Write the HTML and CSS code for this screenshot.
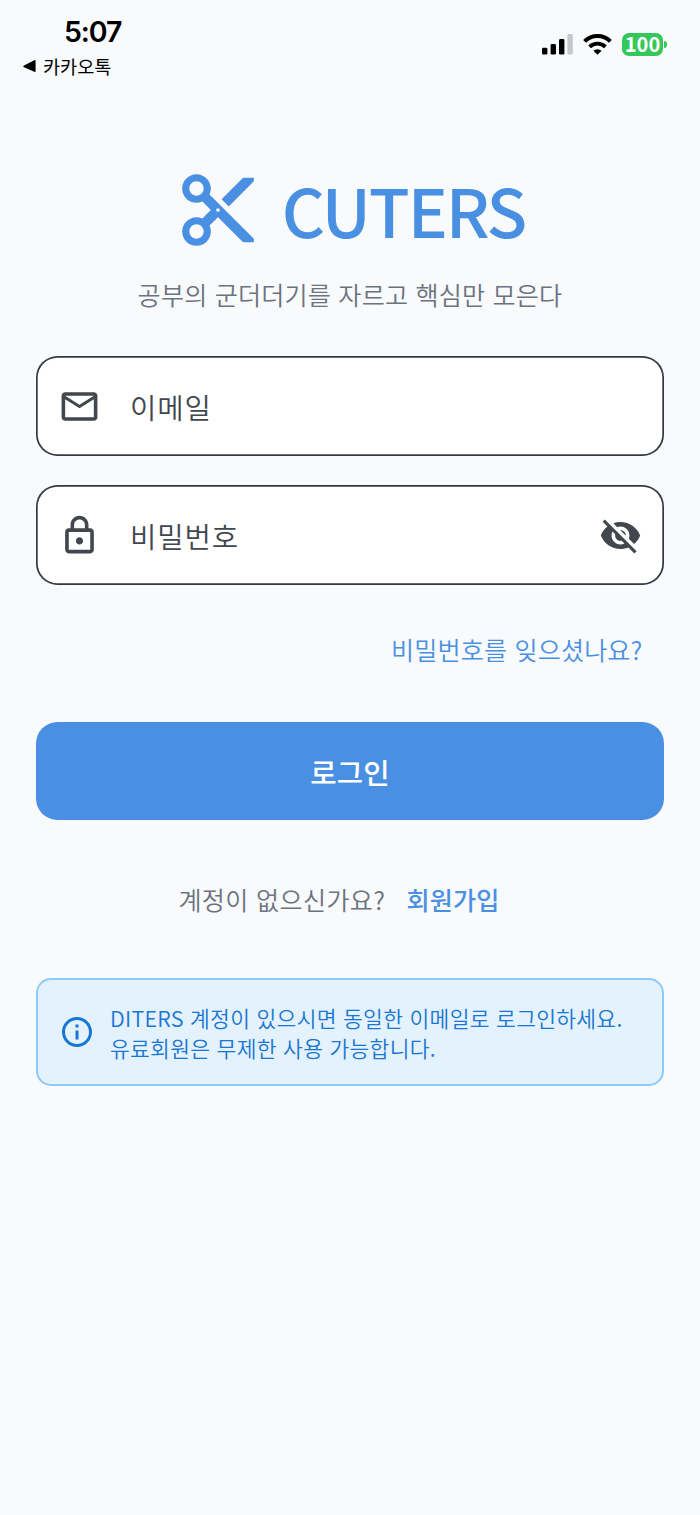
FILE: index.html
```
<!DOCTYPE html>
<html lang="ko">
<head>
  <meta charset="UTF-8">
  <meta name="viewport" content="width=device-width, initial-scale=1.0">
  <title>CUTERS 로그인</title>
  <link rel="stylesheet" href="styles.css">
</head>
<body>
  <header class="status-bar">
    <div class="status-left">
      <div class="time">5:07</div>
      <div class="back-app">
        <svg width="13" height="14" viewBox="0 0 13 14"><path d="M12.6 2v10q0 1.4-1.3.8L1 8.2Q-.6 7.3 1 6.4L11.3 1.2q1.3-.6 1.3.8z"/></svg>
        <span>카카오톡</span>
      </div>
    </div>
    <div class="status-right">
      <svg class="signal" width="31" height="21" viewBox="0 0 31 21">
        <rect x="0" y="13.8" width="5.4" height="6.8" rx="1.4"/>
        <rect x="8.6" y="10" width="5.4" height="10.6" rx="1.4"/>
        <rect x="17" y="5" width="5.4" height="15.6" rx="1.4"/>
        <rect x="25.4" y="0" width="5.4" height="20.6" rx="1.4" fill="#c6c7c9"/>
      </svg>
      <svg class="wifi" width="29" height="21" viewBox="0 0 29 21">
        <path d="M1.6 7.4a18.4 18.4 0 0 1 25.8 0" fill="none" stroke="#000" stroke-width="4"/>
        <path d="M6.6 12.9a11.3 11.3 0 0 1 15.8 0" fill="none" stroke="#000" stroke-width="3.8"/>
        <path d="M14.5 20.8l-4.1-4a6 6 0 0 1 8.2 0z"/>
      </svg>
      <div class="battery">100</div>
      <div class="battery-cap"></div>
    </div>
  </header>

  <main class="container">
    <div class="logo">
      <svg class="logo-icon" viewBox="0 0 24 24"><path d="M9.64 7.64c.23-.5.36-1.05.36-1.64 0-2.21-1.79-4-4-4S2 3.79 2 6s1.79 4 4 4c.59 0 1.14-.13 1.64-.36L10 12l-2.36 2.36C7.14 14.13 6.59 14 6 14c-2.21 0-4 1.79-4 4s1.79 4 4 4 4-1.79 4-4c0-.59-.13-1.14-.36-1.64L12 14l7 7h3v-1L9.64 7.64zM6 8c-1.1 0-2-.89-2-2s.9-2 2-2 2 .89 2 2-.9 2-2 2zm0 12c-1.1 0-2-.89-2-2s.9-2 2-2 2 .89 2 2-.9 2-2 2zm6-7.5c-.28 0-.5-.22-.5-.5s.22-.5.5-.5.5.22.5.5-.22.5-.5.5zM19 3l-6 6 2 2 7-7V3z"/></svg>
      <h1>CUTERS</h1>
    </div>
    <p class="tagline">공부의 군더더기를 자르고 핵심만 모은다</p>

    <form id="loginForm">
      <div class="field">
        <svg class="field-icon" viewBox="0 0 24 24"><path d="M22 6c0-1.1-.9-2-2-2H4c-1.1 0-2 .9-2 2v12c0 1.1.9 2 2 2h16c1.1 0 2-.9 2-2V6zm-2 0l-8 5-8-5h16zm0 12H4V8l8 5 8-5v10z"/></svg>
        <input type="email" id="email" placeholder="이메일">
      </div>
      <div class="field">
        <svg class="field-icon" viewBox="0 0 24 24"><path d="M18 8h-1V6c0-2.76-2.24-5-5-5S7 3.24 7 6v2H6c-1.1 0-2 .9-2 2v10c0 1.1.9 2 2 2h12c1.1 0 2-.9 2-2V10c0-1.1-.9-2-2-2zM9 6c0-1.66 1.34-3 3-3s3 1.34 3 3v2H9V6zm9 14H6V10h12v10zm-6-3c1.1 0 2-.9 2-2s-.9-2-2-2-2 .9-2 2 .9 2 2 2z"/></svg>
        <input type="password" id="password" placeholder="비밀번호">
        <svg class="field-icon" viewBox="0 0 24 24"><path d="M12 7c2.76 0 5 2.24 5 5 0 .65-.13 1.26-.36 1.83l2.92 2.92c1.51-1.26 2.7-2.89 3.43-4.75-1.73-4.39-6-7.5-11-7.5-1.4 0-2.74.25-3.98.7l2.16 2.16C10.74 7.13 11.35 7 12 7zM2 4.27l2.28 2.28.46.46C3.08 8.3 1.78 10.02 1 12c1.73 4.39 6 7.5 11 7.5 1.55 0 3.03-.3 4.38-.84l.42.42L19.73 22 21 20.73 3.27 3 2 4.27zM7.53 9.8l1.55 1.55c-.05.21-.08.43-.08.65 0 1.66 1.34 3 3 3 .22 0 .44-.03.65-.08l1.55 1.55c-.67.33-1.41.53-2.2.53-2.76 0-5-2.24-5-5 0-.79.2-1.53.53-2.2zm4.31-.78l3.15 3.15.02-.16c0-1.66-1.34-3-3-3l-.17.01z"/></svg>
      </div>
      <a class="forgot" href="#">비밀번호를 잊으셨나요?</a>
      <button type="submit">로그인</button>
    </form>

    <div class="signup">
      <span>계정이 없으신가요?</span>
      <a href="#">회원가입</a>
    </div>

    <div class="info">
      <svg class="info-icon" viewBox="0 0 24 24"><path d="M11 7h2v2h-2zm0 4h2v6h-2zm1-9C6.48 2 2 6.48 2 12s4.48 10 10 10 10-4.48 10-10S17.52 2 12 2zm0 18c-4.41 0-8-3.59-8-8s3.59-8 8-8 8 3.59 8 8-3.59 8-8 8z"/></svg>
      <p>DITERS 계정이 있으시면 동일한 이메일로 로그인하세요.<br>유료회원은 무제한 사용 가능합니다.</p>
    </div>
  </main>
</body>
</html>
```
FILE: styles.css
```
:root {
  --primary-color: #4a90e2;
  --bg-color: #f8fafc;
  --text-muted: #6b7280;
  --field-color: #42474e;
  --info-color: #1976d2;
  --border-radius: 21.5px;
}

* {
  box-sizing: border-box;
  margin: 0;
  padding: 0;
}

body {
  font-family: 'Noto Sans CJK KR', sans-serif;
  font-weight: 350;
  background-color: var(--bg-color);
  min-height: 100vh;
}

a {
  color: var(--primary-color);
  text-decoration: none;
}

.status-bar {
  display: flex;
  justify-content: space-between;
  height: 100px;
  padding: 14px 33px 0 23px;
}

.time {
  font-family: Inter, sans-serif;
  font-size: 28.5px;
  font-weight: 600;
  letter-spacing: -1.1px;
  line-height: 35px;
  padding-left: 41px;
}

.back-app {
  display: flex;
  align-items: center;
  gap: 7px;
  font-size: 18.6px;
  font-weight: 400;
  line-height: 33px;
}

.status-right {
  display: flex;
  align-items: center;
  height: 61px;
}

.wifi {
  margin: 0 10px 0 10px;
}

.battery {
  width: 41px;
  height: 23px;
  border-radius: 7px;
  background-color: #34c759;
  color: white;
  font-size: 20px;
  font-weight: 700;
  line-height: 22px;
  text-align: center;
}

.battery-cap {
  width: 3px;
  height: 7px;
  margin-left: 1px;
  border-radius: 0 3px 3px 0;
  background-color: #34c759;
}

.container {
  padding: 66px 36px 0;
}

.logo {
  display: flex;
  justify-content: center;
  align-items: center;
  gap: 21px;
  height: 87px;
}

.logo-icon {
  width: 86px;
  height: 86px;
  fill: var(--primary-color);
}

h1 {
  color: var(--primary-color);
  font-size: 67px;
  font-weight: 500;
  letter-spacing: -2.1px;
  line-height: 85px;
  padding-bottom: 2px;
}

.tagline {
  margin-top: 23px;
  color: var(--text-muted);
  font-size: 25.1px;
  letter-spacing: 0.2px;
  line-height: 36px;
  text-align: center;
}

form {
  display: flex;
  flex-direction: column;
  margin-top: 43.6px;
}

.field {
  display: flex;
  align-items: center;
  height: 100px;
  margin-bottom: 29.3px;
  padding: 1px 22px 0 21.5px;
  background-color: white;
  border-radius: var(--border-radius);
  box-shadow: inset 0 0 0 1.7px #343841;
}

.field-icon {
  width: 43px;
  height: 43px;
  flex-shrink: 0;
  fill: var(--field-color);
}

input {
  flex: 1;
  min-width: 0;
  margin-left: 29.5px;
  border: none;
  outline: none;
  background: transparent;
  color: var(--field-color);
  font-family: inherit;
  font-size: 28.7px;
  font-weight: inherit;
  letter-spacing: 0.85px;
}

input::placeholder {
  color: var(--field-color);
  opacity: 1;
}

.forgot {
  align-self: flex-end;
  margin: 17px 21.5px 0 0;
  font-size: 25.1px;
  letter-spacing: 0.15px;
  line-height: 36px;
}

button {
  height: 98px;
  margin-top: 54.4px;
  padding-top: 2px;
  border: none;
  border-radius: var(--border-radius);
  background-color: var(--primary-color);
  color: white;
  cursor: pointer;
  font-family: inherit;
  font-size: 28.7px;
  font-weight: 500;
  letter-spacing: 0.18px;
}

.signup {
  display: flex;
  justify-content: center;
  gap: 21px;
  margin: 61px 22px 0 0;
  color: var(--text-muted);
  font-size: 25.1px;
  letter-spacing: 0.35px;
  line-height: 36px;
}

.signup a {
  font-weight: 500;
  letter-spacing: 0.2px;
}

.info {
  display: flex;
  align-items: center;
  gap: 15px;
  height: 108px;
  margin-top: 61px;
  padding: 3px 21px 0;
  border: 2px solid #90caf9;
  border-radius: 15px;
  background-color: #e3f2fd;
  color: var(--info-color);
}

.info-icon {
  width: 36px;
  height: 36px;
  margin-bottom: 3px;
  flex-shrink: 0;
  fill: var(--info-color);
}

.info p {
  font-size: 21.5px;
  letter-spacing: 0.28px;
  line-height: 30.2px;
  white-space: nowrap;
}
```
